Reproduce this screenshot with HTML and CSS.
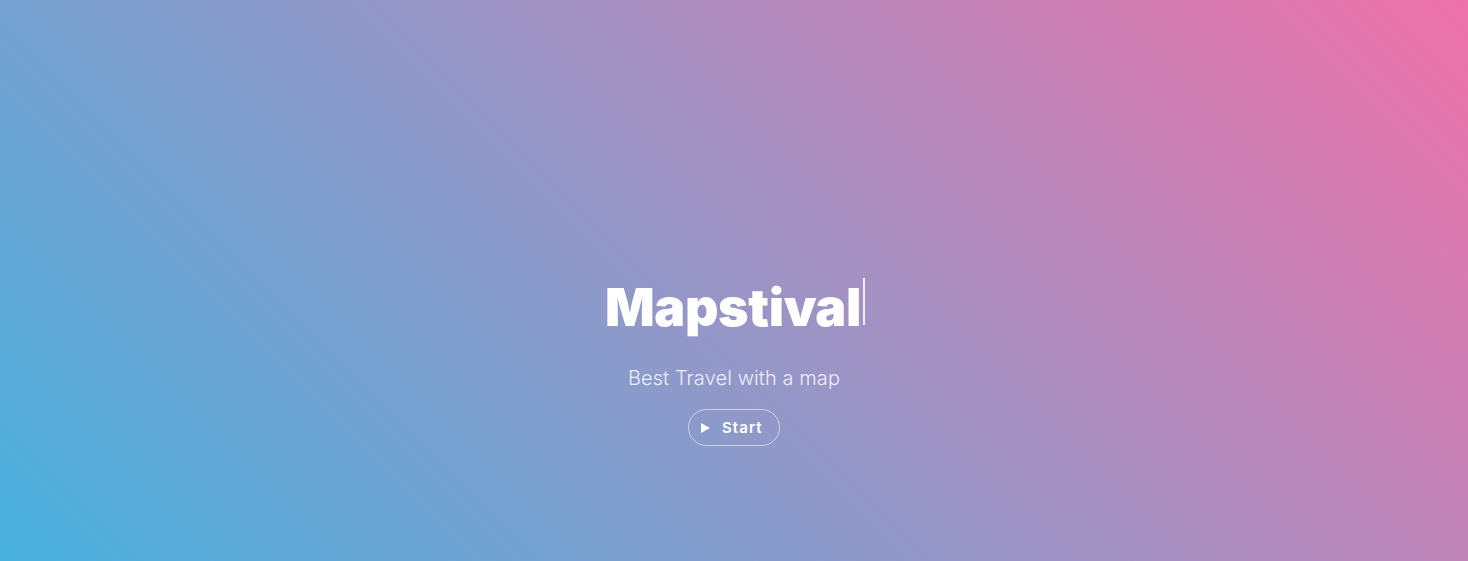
FILE: index.html
```html
<!DOCTYPE html>
<html lang="en">
<head>
<meta charset="utf-8">
<title>Mapstival</title>
<link rel="stylesheet" href="styles.css">
</head>
<body>
<main class="hero">
  <h1 class="title">Mapstival<span class="cursor"></span></h1>
  <p class="subtitle">Best Travel with a map</p>
  <button class="start" type="button">
    <svg class="play" width="9" height="10" viewBox="0 0 9 10"><path d="M0 0 L9 5 L0 10 Z" fill="#fff"/></svg>
    <span>Start</span>
  </button>
</main>
</body>
</html>
```
FILE: styles.css
```css
html, body {
  margin: 0;
  padding: 0;
  height: 100%;
}
body {
  background: linear-gradient(45deg, #48b1de 0%, #9a95c6 50%, #ef72a9 100%);
  font-family: "Inter", "Noto Sans", sans-serif;
  color: #fff;
  overflow: hidden;
}
.hero {
  height: 561px;
  box-sizing: border-box;
  padding-top: 278px;
  display: flex;
  flex-direction: column;
  align-items: center;
}
.title {
  margin: 0;
  font-size: 52px;
  line-height: 60px;
  font-weight: 900;
  letter-spacing: -0.4px;
  display: flex;
  align-items: flex-start;
  padding-left: 2px;
}
.cursor {
  display: inline-block;
  width: 2px;
  height: 47px;
  background: rgba(255,255,255,0.85);
  margin-left: 2px;
}
.subtitle {
  margin: 28px 0 0;
  font-size: 20px;
  line-height: 24px;
  font-weight: 300;
  letter-spacing: 0.1px;
  color: rgba(255,255,255,0.85);
}
.start {
  margin-top: 19px;
  width: 92px;
  height: 37px;
  box-sizing: border-box;
  border: 1px solid rgba(255,255,255,0.55);
  border-radius: 19px;
  background: transparent;
  color: #fff;
  font-family: "Inter", "Noto Sans", sans-serif;
  font-size: 15px;
  font-weight: 600;
  letter-spacing: 1.1px;
  display: flex;
  align-items: center;
  justify-content: flex-start;
  gap: 12px;
  padding: 0 0 0 12px;
}
```
